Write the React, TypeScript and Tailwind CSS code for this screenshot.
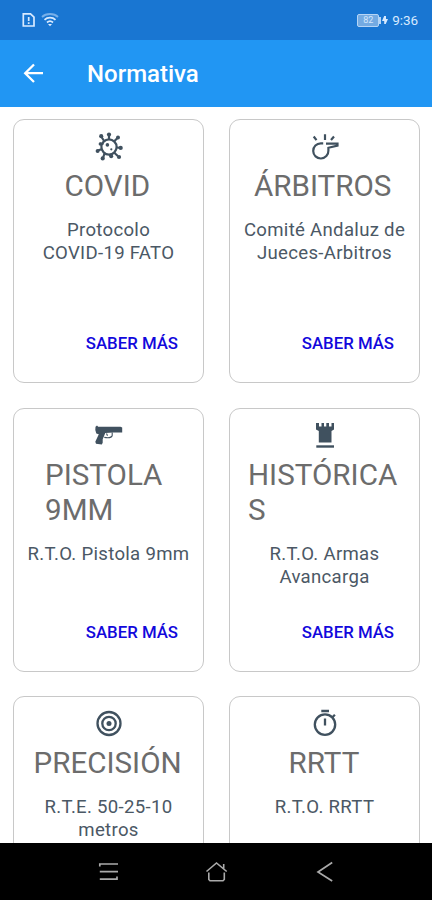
import type { ReactNode } from "react";

const ink = "#40515f";

function VirusIcon() {
  return (
    <svg width="30" height="30" viewBox="0 0 30 30" fill="none" stroke={ink} strokeWidth="2.2">
      <circle cx="15" cy="15" r="7.6" />
      <path d="M15 7.5V3M20 9.5L23.5 6M22.4 15.5L26.5 15.8M20 20.5L23.8 24M15.5 22.5L17.5 24M10.5 21.5L9 26M8 17L4 18.5M9.5 12L5.5 11.5M10.5 9.5L7.5 5" />
      <g fill={ink} stroke="none">
        <circle cx="15" cy="2.6" r="2.1" />
        <circle cx="24" cy="5.4" r="2" />
        <circle cx="26.7" cy="15.9" r="2.1" />
        <circle cx="25" cy="25" r="2.1" />
        <circle cx="17.2" cy="24.2" r="2" />
        <circle cx="8.7" cy="26.4" r="2.1" />
        <circle cx="3.6" cy="18.9" r="2" />
        <circle cx="6.4" cy="12" r="1.8" />
        <circle cx="7.2" cy="4.2" r="2.1" />
        <circle cx="13.4" cy="12.9" r="1.8" />
        <circle cx="17.3" cy="17.3" r="1.1" />
      </g>
    </svg>
  );
}

function WhistleIcon() {
  return (
    <svg width="30" height="30" viewBox="0 0 30 30" fill="none" stroke={ink} strokeWidth="2.2">
      <path d="M16 11.6H27.5V13.6L18.4 15.8V18.6A7.6 7.6 0 1 1 10.8 11.3H13.2" />
      <path d="M15 8V2.2M3.7 4.5L6.5 8.2M24 4.5L21 8" />
    </svg>
  );
}

function PistolIcon() {
  return (
    <svg width="30" height="30" viewBox="0 0 30 30">
      <path
        fill={ink}
        d="M1.5 5.8L3 4.4L4.2 5.7H26.5L28.2 6.6V11.4H19.5L11.3 12L8.7 18.2V21.7L7.8 23.5L2 22.8L1.3 20.8L4.8 13.3L2.3 12.5L1.3 9Z"
      />
      <path fill="none" stroke={ink} strokeWidth="1.1" d="M18.2 11.5V14.5C17.5 17 14 17 10.3 16.4M12.5 12.5L13.5 14.7" />
    </svg>
  );
}

function RookIcon() {
  return (
    <svg width="30" height="30" viewBox="0 0 30 30" fill={ink}>
      <path d="M6 2H9V5.5H11.5V2H14V5.5H16.3V2H19V5.5H21.5V2H24V8.5L21.5 10V21.5H8.8V10L6 8.5Z" />
      <path d="M6.3 24.3H24V26.7H6.3Z" />
    </svg>
  );
}

function TargetIcon() {
  return (
    <svg width="30" height="30" viewBox="0 0 30 30" fill="none" stroke={ink} strokeWidth="2.3">
      <circle cx="15" cy="14.5" r="11.5" />
      <circle cx="15" cy="14.5" r="6.7" />
      <circle cx="15" cy="14.5" r="2.5" fill={ink} stroke="none" />
    </svg>
  );
}

function StopwatchIcon() {
  return (
    <svg width="30" height="30" viewBox="0 0 30 30" fill="none" stroke={ink} strokeWidth="2.3">
      <circle cx="15" cy="15.6" r="10.2" />
      <path d="M11.3 2H19M15 9.6V16.6M22.4 8.3L24.9 5.8" />
    </svg>
  );
}

type Item = {
  title: string;
  text: string;
  icon: ReactNode;
  titleClass: string;
  textClass: string;
  action?: string;
};

const items: Item[] = [
  { title: "COVID", text: "Protocolo COVID-19 FATO", icon: <VirusIcon />, titleClass: "w-[88px]", textClass: "w-[140px]", action: "SABER MÁS" },
  { title: "ÁRBITROS", text: "Comité Andaluz de Jueces-Arbitros", icon: <WhistleIcon />, titleClass: "w-[141px]", textClass: "w-[180px]", action: "SABER MÁS" },
  { title: "PISTOLA 9MM", text: "R.T.O. Pistola 9mm", icon: <PistolIcon />, titleClass: "w-[127px]", textClass: "w-[180px]", action: "SABER MÁS" },
  { title: "HISTÓRICAS", text: "R.T.O. Armas Avancarga", icon: <RookIcon />, titleClass: "w-[153px] break-all", textClass: "w-[150px]", action: "SABER MÁS" },
  { title: "PRECISIÓN", text: "R.T.E. 50-25-10 metros", icon: <TargetIcon />, titleClass: "w-[150px]", textClass: "w-[150px]" },
  { title: "RRTT", text: "R.T.O. RRTT", icon: <StopwatchIcon />, titleClass: "w-[72px]", textClass: "w-[180px]" },
];

function Card({ item }: { item: Item }) {
  return (
    <article className="flex h-[264px] flex-col items-center rounded-[11px] border-[1.5px] border-[#c8c8c8] bg-white pt-3">
      <div className="h-[30px] shrink-0">{item.icon}</div>
      <h2 className={`mt-[7px] text-[29.6px] leading-[35px] text-[#6c6c6c] ${item.titleClass}`}>{item.title}</h2>
      <p className={`mt-[15px] text-center text-[18.6px] leading-[23px] tracking-[0.3px] text-[#4b5865] ${item.textClass}`}>
        {item.text}
      </p>
      {item.action && (
        <a className="mt-auto mr-[25px] mb-[29px] self-end text-[16.8px] leading-[20px] font-medium text-[#1208dc]">{item.action}</a>
      )}
    </article>
  );
}

export default function App() {
  return (
    <div className="flex h-[900px] w-[432px] flex-col overflow-hidden bg-white font-['Roboto',sans-serif]">
      <div className="flex h-10 shrink-0 items-center bg-[#1976d2] pr-[14px] pl-[22px] text-[#d8eaff]">
        <svg width="14" height="16" viewBox="0 0 14 16" fill="none" stroke="currentColor" strokeWidth="1.7">
          <path d="M1.3 1.8H8.5L12 5V14H1.3Z" />
          <path d="M6.7 5V9M6.7 10.2V12" />
        </svg>
        <svg className="ml-[5px]" width="18" height="16" viewBox="0 0 18 16" fill="none" stroke="currentColor" strokeWidth="1.8">
          <path opacity=".5" d="M1 5C5 1 13 1 17 5" />
          <path d="M3.5 7.8C6.5 5 11.5 5 14.5 7.8M6 10.5C7.7 9 10.3 9 12 10.5" />
          <path d="M7 12L9 14.3L11 12Z" fill="currentColor" stroke="none" />
        </svg>
        <div className="ml-auto flex items-center">
          <div className="flex h-[13px] w-[22px] items-center justify-center rounded-[2px] border-[1.5px] border-[#b5d5f6] bg-[#73aae2] text-[9px] leading-none text-[#d3e7fc]">
            82
          </div>
          <div className="h-[7px] w-[2px] bg-[#b5d5f6]" />
          <svg className="ml-px" width="6" height="10" viewBox="0 0 6 10" fill="currentColor">
            <path d="M2.2 1H4V4H6L3.7 9H2.2V6H0Z" />
          </svg>
          <span className="ml-1 text-[13.5px] leading-4 tracking-[-0.1px]">9:36</span>
        </div>
      </div>
      <header className="flex h-[67px] shrink-0 items-center bg-[#2196f3] pl-[23px] text-white">
        <svg width="22" height="22" viewBox="0 0 22 22" fill="none" stroke="currentColor" strokeWidth="2.3">
          <path d="M20 10.2H2M11 1.5L2.2 10.2L11 19" />
        </svg>
        <h1 className="ml-[42px] text-[24px] leading-7 font-medium">Normativa</h1>
      </header>
      <main className="grid min-h-0 flex-1 grid-cols-2 content-start gap-x-[25px] gap-y-[24.5px] overflow-hidden pt-3 pr-3 pl-[13px]">
        {items.map((item) => (
          <Card key={item.title} item={item} />
        ))}
      </main>
      <nav className="flex h-[57px] shrink-0 items-center bg-black pl-[98px] text-[#aaa]">
        <svg width="21" height="20" viewBox="0 0 21 20" fill="none" stroke="currentColor" strokeWidth="1.7">
          <path d="M1.8 4.5V2H20M1.8 9.6H20M1.8 17.2H19V14.5" />
        </svg>
        <svg className="ml-[86px]" width="23" height="22" viewBox="0 0 23 22" fill="none" stroke="currentColor" strokeWidth="1.6">
          <path d="M1.5 10.5L11.5 2L21.7 10.5M18.7 7.5V3M3.8 11.5V18.5L5 19.8H18L19.3 18.5V11.5" />
        </svg>
        <svg className="ml-[88px]" width="18" height="22" viewBox="0 0 18 22" fill="none" stroke="currentColor" strokeWidth="1.7">
          <path d="M16.2 1.5L2 11L16.2 20" />
        </svg>
      </nav>
    </div>
  );
}
